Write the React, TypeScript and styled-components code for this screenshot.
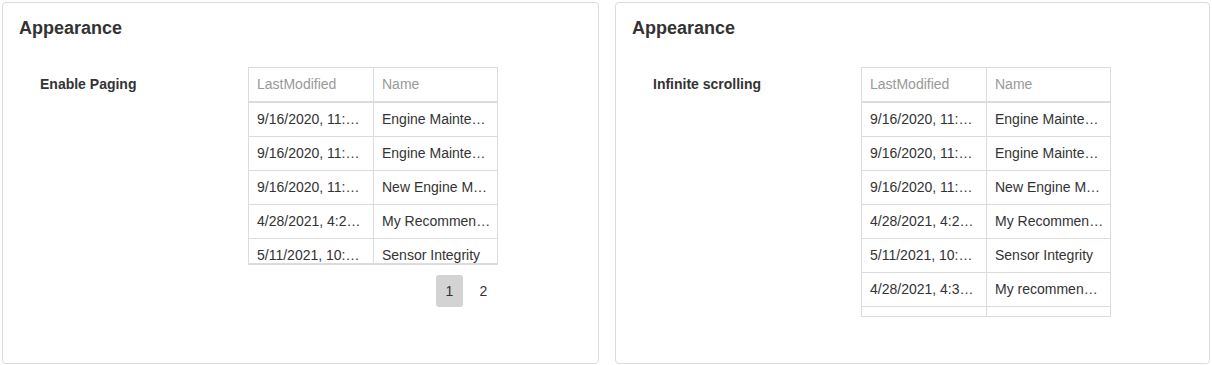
import React from 'react';
import styled, { createGlobalStyle } from 'styled-components';

const GlobalStyle = createGlobalStyle`
  body {
    margin: 0;
    background: #fff;
    font-family: "Liberation Sans", Arial, sans-serif;
    color: #333;
  }
`;

const S = {
  Page: styled.div`
    display: grid;
    grid-template-columns: 597px 595px;
    gap: 16px;
    padding: 2px 0 0 2px;
  `,
  Card: styled.section`
    box-sizing: border-box;
    height: 362px;
    border: 1px solid #dcdcdc;
    border-radius: 4px;
    padding: 15px 16px 0 16px;
  `,
  Title: styled.h2`
    margin: 0;
    font-size: 18px;
    line-height: 21px;
    font-weight: bold;
    color: #333;
  `,
  Setting: styled.div`
    display: grid;
    grid-template-columns: 229px 250px;
    margin-top: 28px;
  `,
  Label: styled.div`
    padding-left: 21px;
    font-size: 14px;
    font-weight: bold;
    line-height: 34px;
    color: #333;
  `,
  Grid: styled.div``,
  Viewport: styled.div<{ $height: number; $bottom: number }>`
    box-sizing: content-box;
    width: 248px;
    height: ${(p) => p.$height}px;
    overflow: hidden;
    border: 1px solid #dcdcdc;
    border-bottom-width: ${(p) => p.$bottom}px;
  `,
  Row: styled.div<{ $head?: boolean }>`
    display: grid;
    grid-template-columns: 125px 123px;
    height: ${(p) => (p.$head ? 35 : 34)}px;
    box-sizing: border-box;
    border-bottom: ${(p) => (p.$head ? 2 : 1)}px solid #dcdcdc;
  `,
  Cell: styled.div<{ $head?: boolean }>`
    box-sizing: border-box;
    padding: 0 6px 0 8px;
    font-size: 14px;
    line-height: 33px;
    color: ${(p) => (p.$head ? '#999' : '#333')};
    white-space: nowrap;
    overflow: hidden;
    text-overflow: ellipsis;
    &:first-child {
      border-right: 1px solid #dcdcdc;
    }
  `,
  Pager: styled.div`
    display: flex;
    justify-content: flex-end;
    gap: 7px;
    margin-top: 10px;
    padding-right: 1px;
  `,
  PageButton: styled.button<{ $active?: boolean }>`
    width: 27px;
    height: 32px;
    padding: 0;
    border: none;
    border-radius: 3px;
    background: ${(p) => (p.$active ? '#d3d3d3' : 'transparent')};
    font-family: inherit;
    font-size: 14px;
    color: #333;
  `,
};

interface Item {
  modified: string;
  name: string;
}

const items: Item[] = [
  { modified: '9/16/2020, 11:03:12 AM', name: 'Engine Maintenance Guide' },
  { modified: '9/16/2020, 11:05:47 AM', name: 'Engine Maintenance Plan' },
  { modified: '9/16/2020, 11:08:21 AM', name: 'New Engine Model' },
  { modified: '4/28/2021, 4:21:09 PM', name: 'My Recommendations' },
  { modified: '5/11/2021, 10:14:55 AM', name: 'Sensor Integrity' },
  { modified: '4/28/2021, 4:35:40 PM', name: 'My recommendations' },
  { modified: '', name: '' },
];

function DataGrid({ rows, height, bottom }: { rows: Item[]; height: number; bottom: number }) {
  return (
    <S.Viewport $height={height} $bottom={bottom}>
      <S.Row $head>
        <S.Cell $head>LastModified</S.Cell>
        <S.Cell $head>Name</S.Cell>
      </S.Row>
      {rows.map((item, i) => (
        <S.Row key={i}>
          <S.Cell>{item.modified}</S.Cell>
          <S.Cell>{item.name}</S.Cell>
        </S.Row>
      ))}
    </S.Viewport>
  );
}

export default function App() {
  return (
    <>
      <GlobalStyle />
      <S.Page>
        <S.Card>
          <S.Title>Appearance</S.Title>
          <S.Setting>
            <S.Label>Enable Paging</S.Label>
            <S.Grid>
              <DataGrid rows={items.slice(0, 5)} height={195} bottom={2} />
              <S.Pager>
                <S.PageButton $active>1</S.PageButton>
                <S.PageButton>2</S.PageButton>
              </S.Pager>
            </S.Grid>
          </S.Setting>
        </S.Card>
        <S.Card>
          <S.Title>Appearance</S.Title>
          <S.Setting>
            <S.Label>Infinite scrolling</S.Label>
            <S.Grid>
              <DataGrid rows={items} height={248} bottom={1} />
            </S.Grid>
          </S.Setting>
        </S.Card>
      </S.Page>
    </>
  );
}
